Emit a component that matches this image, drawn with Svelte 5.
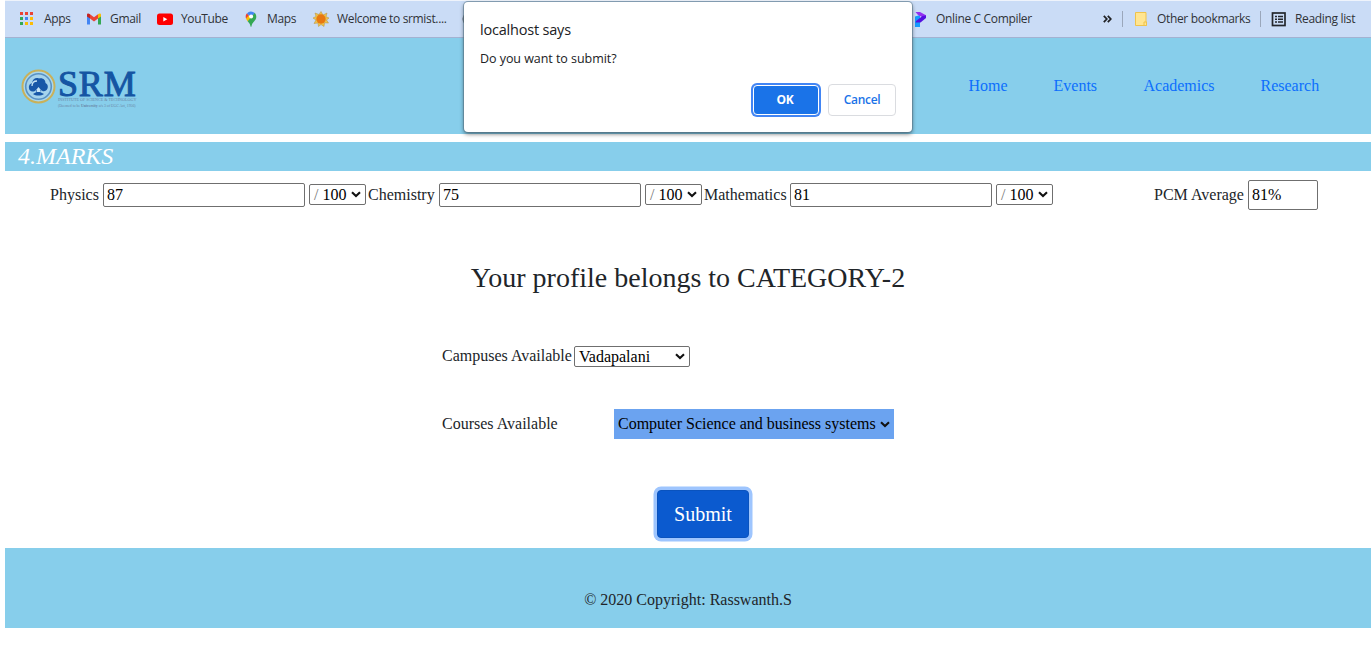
<script>
  const bookmarks = [
    { id: 'apps', label: 'Apps', width: 66 },
    { id: 'gmail', label: 'Gmail', width: 71 },
    { id: 'youtube', label: 'YouTube', width: 86 },
    { id: 'maps', label: 'Maps', width: 70 },
    { id: 'sun', label: 'Welcome to srmist....', width: 149 }
  ];
  const appColors = ['#ea4335', '#ea4335', '#ea4335', '#34a853', '#4285f4', '#fbbc05', '#34a853', '#fbbc05', '#fbbc05'];
  const subjects = [
    { name: 'Physics', mark: '87', width: 53 },
    { name: 'Chemistry', mark: '75', width: 71 },
    { name: 'Mathematics', mark: '81', width: 86 }
  ];
  const links = [
    { name: 'Home', width: 85 },
    { name: 'Events', width: 90 },
    { name: 'Academics', width: 117 },
    { name: 'Research', width: 60 }
  ];
</script>

{#snippet chevron()}
  <svg class="chevron" width="10" height="7" viewBox="0 0 10 7"><path d="M1 1.2 5 5 9 1.2" fill="none" stroke="#111" stroke-width="2.1" /></svg>
{/snippet}

{#snippet icon(id)}
  <svg class="icon" width="16" height="16" viewBox="0 0 16 16">
    {#if id === 'apps'}
      {#each appColors as c, i}
        <rect x={(i % 3) * 5} y={1 + Math.floor(i / 3) * 5} width="3" height="3" fill={c} />
      {/each}
    {:else if id === 'gmail'}
      <path d="M1 4v9.500h3V7z" fill="#4285f4" />
      <path d="M12 7v6.500h3V4z" fill="#34a853" />
      <path d="M4 3.200 8 6.300l4-3.100v4.300l-4 3-4-3z" fill="#ea4335" />
      <path d="M1 5.500V3.700C1 2.200 2.600 1.900 4 3.200v4.300z" fill="#c5221f" />
      <path d="M15 5.500V3.700c0-1.500-1.600-1.800-3-.5v4.300z" fill="#fbbc04" />
    {:else if id === 'youtube'}
      <rect x="0" y="2.500" width="16" height="11.500" rx="2.500" fill="#f00" />
      <path d="M6.300 5.900v4.700l4-2.350z" fill="#fff" />
    {:else if id === 'maps'}
      <path d="M4 2.300a5.200 5.200 0 0 0-.9 5.500L7 6z" fill="#ea4335" />
      <path d="M3 7.500c.4 1.100 1 2 1.800 2.900L11 4 7 3z" fill="#fbbc04" />
      <path d="M4.700 10.300C6 12 7.200 13.200 7.500 15.200c.1.700.9.700 1 0 .6-4.200 4.800-5.400 4.800-9.400 0-1.600-.7-3-1.700-4z" fill="#34a853" />
      <path d="M4 2.400A5.200 5.200 0 0 1 11.700 2L8.800 5 6.500 5z" fill="#4285f4" />
      <circle cx="8.100" cy="5.600" r="2" fill="#fff" />
    {:else if id === 'sun'}
      <path d="M8 .5 10 4l4-2-1 3.700 3 1.300-2.500 2 2 3-4-.2-.5 3.700L8 13.500 5.500 15.500 5 12l-4 .5 2-3.500L0 7l3-1.500L2 2l4 1.500z" fill="#edc34b" stroke="#b98e3d" stroke-width=".5" />
      <circle cx="8" cy="8" r="4.700" fill="#e87811" />
    {:else if id === 'globe'}
      <circle cx="8" cy="8" r="7.500" fill="#5f6368" />
    {:else if id === 'compiler'}
      <path d="M3 5.500 8 4v12H3z" fill="#169cff" />
      <path d="M3.500 1H8l6 3.200V7l-3-.5L6 4z" fill="#9430f0" />
      <path d="M10.500 5 14 4.500V7L8.500 11.500H3.500L4 10z" fill="#5310e0" />
    {:else if id === 'folder'}
      <path d="M2.500 1.500h10.500v9.500h.5v3.500h-11z" fill="#ffe591" stroke="#efc34b" />
      <path d="M11 11h2.500v3.500H11z" fill="#ffe591" stroke="#efc34b" />
    {:else}
      <rect x="1.500" y="2" width="12.500" height="12.500" fill="none" stroke="#24272c" stroke-width="1.700" />
      <path d="M4 5.500h2M4 8.250h2M4 11h2M7 5.500h5M7 8.250h5M7 11h5" stroke="#24272c" stroke-width="1.400" />
    {/if}
  </svg>
{/snippet}

<div class="page">
  <div class="bar">
    {#each bookmarks as b}
      <div class="mark" style:width="{b.width}px">{@render icon(b.id)}<span>{b.label}</span></div>
    {/each}
    {@render icon('globe')}
    <div class="mark compiler">{@render icon('compiler')}<span>Online C Compiler</span></div>
    <svg class="more" width="9" height="8" viewBox="0 0 9 8"><path d="m.8.8 3 3.200-3 3.200M4.800.8l3 3.200-3 3.200" fill="none" stroke="#202124" stroke-width="1.700" /></svg>
    <i class="sep"></i>
    <div class="mark other">{@render icon('folder')}<span>Other bookmarks</span></div>
    <i class="sep"></i>
    <div class="mark reading">{@render icon('list')}<span>Reading list</span></div>
  </div>

  <header>
    <div class="logo">
      <svg width="35" height="35" viewBox="0 0 35 35">
        <circle cx="17.500" cy="17.500" r="16" fill="#a8d7ee" stroke="#c9b15a" stroke-width="2" />
        <circle cx="17.500" cy="17.500" r="12.800" fill="#a5d3ec" stroke="#5a92c4" stroke-width="1.600" />
        <path d="M8.500 21c-1.500-4 0-6 2.500-7 .5-4 4-6 7-4.500 4-1 6.500 1.500 6.500 4.500 3 1.500 3 5.500.5 7.500-2 1.500-4 .5-5-.5l-1 2 4 2c-3 2-8 2-11 0l3.500-2-.5-2c-2 2-4.500 2-6.500 0z" fill="#1757a8" />
        <path d="M11 17c0-3 2-5 5-5" fill="none" stroke="#c8e5f6" stroke-width="1.300" />
        <path d="m17.500 18 2 2.500-.5 2.500h-3l-.5-2.500z" fill="#c8e5f6" />
      </svg>
      <div class="wordmark">
        <strong>SRM</strong>
        <small>INSTITUTE OF SCIENCE &amp; TECHNOLOGY</small>
        <small class="deemed">(Deemed to be <b>University</b> u/s 3 of UGC Act, 1956)</small>
      </div>
    </div>
    <nav>
      {#each links as l}<a href="#top" style:width="{l.width}px">{l.name}</a>{/each}
    </nav>
  </header>

  <h2>4.MARKS</h2>

  <div class="marks">
    {#each subjects as s}
      <label class="subject"><span class="name" style:width="{s.width}px">{s.name}</span><input value={s.mark} /></label>
      <div class="select out"><span><span class="slash">/</span> 100</span>{@render chevron()}</div>
    {/each}
    <label class="average"><span class="name">PCM Average</span><input value="81%" /></label>
  </div>

  <h1>Your profile belongs to CATEGORY-2</h1>

  <div class="field campus"><span>Campuses Available</span><div class="select"><span>Vadapalani</span>{@render chevron()}</div></div>
  <div class="field course"><span>Courses Available</span><div class="select"><span>Computer Science and business systems</span>{@render chevron()}</div></div>

  <button class="submit">Submit</button>
  <footer>© 2020 Copyright: Rasswanth.S</footer>

  <div class="dialog" role="alertdialog" aria-label="localhost says">
    <div class="title">localhost says</div>
    <p>Do you want to submit?</p>
    <div class="actions"><button class="ok">OK</button><button class="cancel">Cancel</button></div>
  </div>
</div>

<style>
  :global(body) { margin: 0; background: #fff; overflow: hidden; }
  .page, .page :global(*) { box-sizing: border-box; }
  .page { position: relative; width: 1371px; height: 660px; padding-left: 5px; overflow: hidden; font: 16px/24px "Liberation Serif", serif; color: #212529; }
  .bar { height: 38px; display: flex; align-items: center; padding-left: 15px; background: #cadcf6; border-top: 1px solid #eef3fb; border-bottom: 1px solid #a3b2d2; font: 12px/16px "Open Sans", sans-serif; letter-spacing: -.34px; color: #303338; }
  .mark { display: flex; align-items: center; gap: 8px; flex: none; white-space: nowrap; }
  .icon { flex: none; display: block; }
  .compiler { width: 190px; margin-left: 434px; }
  .more { flex: none; margin-left: 1px; }
  .sep { width: 1px; height: 16px; background: #9aa7bb; margin: 0 10px; flex: none; }
  .other { width: 117px; }
  .reading { width: 90px; }
  header { height: 96px; background: #87ceeb; display: flex; justify-content: space-between; align-items: center; padding-left: 16px; }
  .logo { display: flex; align-items: flex-start; gap: 2px; height: 40px; width: 118px; margin-top: 6px; }
  .logo svg { flex: none; }
  .wordmark { display: flex; flex-direction: column; width: 80px; color: #1555a3; }
  .wordmark strong { height: 28px; font: 400 36px/30px "Liberation Serif", serif; letter-spacing: .8px; -webkit-text-stroke: 1px #1555a3; }
  .wordmark small { font-size: 4.100px; line-height: 6px; height: 6px; white-space: nowrap; color: #6a84a4; }
  .wordmark .deemed { font-size: 3.750px; line-height: 7px; height: 7px; }
  nav { display: flex; width: 403px; padding-left: .5px; }
  nav a { color: #0d6efd; text-decoration: none; }
  h2 { height: 29px; margin: 8px 0 0; padding-left: 13px; background: #87ceeb; color: #fff; font: italic 24px/29px "Liberation Serif", serif; }
  .marks { display: flex; align-items: center; height: 48px; padding-left: 45px; white-space: nowrap; }
  .subject, .average { display: flex; align-items: center; }
  input { width: 202px; height: 24px; padding: 1px 3px; border: 1px solid #6f6f6f; border-radius: 2px; background: #fff; font: 16px/20px "Liberation Serif", serif; color: #000; }
  .select { display: flex; align-items: center; justify-content: space-between; height: 21px; border: 1px solid #6f6f6f; border-radius: 2px; padding: 0 4px; font: 16px/20px "Liberation Serif", serif; color: #000; }
  .out { width: 57px; margin: 0 2px 1px 4px; }
  .slash { color: #777; }
  .average { margin-left: 99px; }
  .average .name { width: 94px; }
  .average input { width: 70px; height: 30px; }
  h1 { margin: 42px 0 0; font: 400 28px/34px "Liberation Serif", serif; text-align: center; }
  .field { display: flex; align-items: center; margin-left: 437px; }
  .campus { margin-top: 49px; height: 24px; }
  .campus > span { width: 132px; }
  .campus .select { width: 116px; }
  .campus .select span { padding-top: 1px; }
  .course { margin-top: 41px; height: 30px; }
  .course > span { width: 172px; }
  .course .select { width: 280px; height: 30px; border: 0; border-radius: 0; background: #6ba3f0; padding: 0 4px; white-space: nowrap; }
  button { margin: 0; padding: 0; cursor: pointer; }
  .submit { display: block; width: 92px; height: 48px; margin: 51px 0 0 652px; border: 1px solid #0a53be; border-radius: 4px; background: #0b5acf; color: #fff; font: 20px/30px "Liberation Serif", serif; box-shadow: 0 0 0 3.500px #9ec5fe; }
  footer { height: 80px; margin-top: 10px; padding-top: 24px; background: #87ceeb; text-align: center; line-height: 56px; }
  .dialog { position: absolute; left: 464px; top: 2px; width: 448px; height: 130px; padding: 17px 16px 0; border-radius: 4px; background: #fff; box-shadow: 0 0 0 1px #5c7a8c99, 0 2px 4px #0008; font-family: "Open Sans", sans-serif; color: #202124; }
  .title { font-size: 14.500px; line-height: 22px; letter-spacing: -.2px; }
  .dialog p { margin: 9px 0 0; font-size: 12.500px; line-height: 18px; letter-spacing: -.05px; }
  .actions { display: flex; justify-content: flex-end; gap: 9px; margin-top: 16px; }
  .actions button { height: 32px; border-radius: 4px; font: 600 12px/16px "Open Sans", sans-serif; letter-spacing: -.3px; }
  .actions .ok { width: 66px; height: 30px; margin-top: 1px; padding-right: 2px; background: #1a73e8; color: #fff; font-weight: 700; border: 1px solid #fff; box-shadow: 0 0 0 2px #4285f4; }
  .cancel { width: 68px; background: #fff; color: #1a73e8; border: 1px solid #dadce0; }
</style>
